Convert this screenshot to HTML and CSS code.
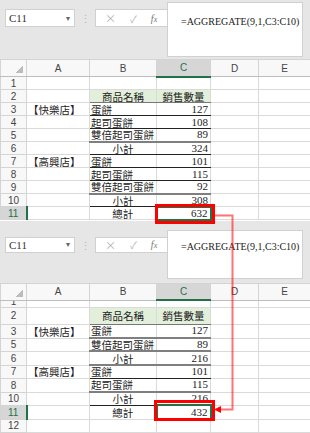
FILE: index.html
```html
<!DOCTYPE html>
<html lang="zh-Hant">
<head>
  <meta charset="UTF-8">
  <title>AGGREGATE 隱藏列</title>
  <link rel="stylesheet" href="styles.css">
</head>
<body>
  <div class="page">

    <!-- before hiding rows -->
    <section class="panel">
      <div class="toolbar">
        <div class="namebox"><span>C11</span><span class="caret">&#9662;</span></div>
        <div class="grip">&#8942;</div>
        <div class="fx-buttons"><span class="x">&#215;</span><span class="ok">&#10003;</span><span class="fx">f<i>x</i></span></div>
        <div class="formula">=AGGREGATE(9,1,C3:C10)</div>
      </div>
      <table class="grid">
        <colgroup><col class="c-hd"><col class="c-a"><col class="c-b"><col class="c-c"><col class="c-d"><col class="c-e"></colgroup>
        <tr class="head"><th class="corner"></th><th>A</th><th>B</th><th class="sel">C</th><th>D</th><th>E</th></tr>
        <tr><th>1</th><td></td><td></td><td></td><td></td><td></td></tr>
        <tr><th>2</th><td></td><td class="title">商品名稱</td><td class="title">銷售數量</td><td></td><td></td></tr>
        <tr><th>3</th><td>【快樂店】</td><td class="item line">蛋餅</td><td class="num line">127</td><td></td><td></td></tr>
        <tr><th>4</th><td></td><td class="item line">起司蛋餅</td><td class="num line">108</td><td></td><td></td></tr>
        <tr><th>5</th><td></td><td class="item heavy">雙倍起司蛋餅</td><td class="num heavy">89</td><td></td><td></td></tr>
        <tr><th>6</th><td></td><td class="item sub line">小計</td><td class="num line">324</td><td></td><td></td></tr>
        <tr><th>7</th><td>【高興店】</td><td class="item line">蛋餅</td><td class="num line">101</td><td></td><td></td></tr>
        <tr><th>8</th><td></td><td class="item line">起司蛋餅</td><td class="num line">115</td><td></td><td></td></tr>
        <tr><th>9</th><td></td><td class="item heavy">雙倍起司蛋餅</td><td class="num heavy">92</td><td></td><td></td></tr>
        <tr><th>10</th><td></td><td class="item sub line">小計</td><td class="num line">308</td><td></td><td></td></tr>
        <tr><th class="sel-row">11</th><td></td><td class="item sub">總計</td><td class="num active">632</td><td></td><td></td></tr>
      </table>
    </section>

    <!-- after hiding rows 4 and 9 -->
    <section class="panel panel-second">
      <div class="toolbar">
        <div class="namebox"><span>C11</span><span class="caret">&#9662;</span></div>
        <div class="grip">&#8942;</div>
        <div class="fx-buttons"><span class="x">&#215;</span><span class="ok">&#10003;</span><span class="fx">f<i>x</i></span></div>
        <div class="formula">=AGGREGATE(9,1,C3:C10)</div>
      </div>
      <table class="grid">
        <colgroup><col class="c-hd"><col class="c-a"><col class="c-b"><col class="c-c"><col class="c-d"><col class="c-e"></colgroup>
        <tr class="head"><th class="corner"></th><th>A</th><th>B</th><th class="sel">C</th><th>D</th><th>E</th></tr>
        <tr class="cut"><th><div class="clip">1</div></th><td></td><td></td><td></td><td></td><td></td></tr>
        <tr class="tall"><th>2</th><td></td><td class="title">商品名稱</td><td class="title">銷售數量</td><td></td><td></td></tr>
        <tr class="t"><th>3</th><td>【快樂店】</td><td class="item heavy">蛋餅</td><td class="num heavy">127</td><td></td><td></td></tr>
        <tr><th>5</th><td></td><td class="item heavy">雙倍起司蛋餅</td><td class="num heavy">89</td><td></td><td></td></tr>
        <tr class="t"><th>6</th><td></td><td class="item sub heavy">小計</td><td class="num heavy">216</td><td></td><td></td></tr>
        <tr><th>7</th><td>【高興店】</td><td class="item line">蛋餅</td><td class="num line">101</td><td></td><td></td></tr>
        <tr class="t"><th>8</th><td></td><td class="item heavy">起司蛋餅</td><td class="num heavy">115</td><td></td><td></td></tr>
        <tr><th>10</th><td></td><td class="item sub line">小計</td><td class="num line">216</td><td></td><td></td></tr>
        <tr class="t"><th class="sel-row">11</th><td></td><td class="item sub">總計</td><td class="num active">432</td><td></td><td></td></tr>
        <tr><th>12</th><td></td><td></td><td></td><td></td><td></td></tr>
      </table>
    </section>

    <!-- red callout linking the two totals -->
    <svg class="callout" width="310" height="433" viewBox="0 0 310 433">
      <rect x="156.5" y="205.5" width="57" height="17" fill="none" stroke="#ff0000" stroke-width="3"/>
      <rect x="155.5" y="401.5" width="58" height="18" fill="none" stroke="#ff0000" stroke-width="3"/>
      <polyline points="214,215.5 232.5,215.5 232.5,409.5 220,409.5" fill="none" stroke="#ff0000" stroke-opacity="0.55" stroke-width="2"/>
      <polygon points="214,409.5 221,406 221,413" fill="#ff0000"/>
    </svg>
  </div>
</body>
</html>
```

FILE: styles.css
```css
* {
  box-sizing: border-box;
}
body {
  margin: 0;
  background-color: #e6e6e6;
  font-family: "Noto Sans CJK TC", "Noto Sans", sans-serif;
  color: #222;
}
.page {
  position: relative;
  width: 310px;
  height: 433px;
  overflow: hidden;
}
.panel {
  background-color: #e6e6e6;
  padding-bottom: 3px;
}

/* formula bar */
.toolbar {
  display: flex;
  align-items: flex-start;
  height: 59px;
  padding-left: 5px;
  padding-right: 7px;
}
.namebox {
  display: flex;
  align-items: center;
  justify-content: space-between;
  width: 70px;
  height: 18px;
  margin-top: 9px;
  padding: 0 4px 0 3px;
  background-color: white;
  border: 1px solid #d0d0d0;
  font-family: "Liberation Serif", serif;
  font-size: 11px;
  color: #333;
}
.caret {
  font-size: 8px;
  color: #666;
}
.grip {
  width: 20px;
  margin-top: 10px;
  text-align: center;
  font-size: 11px;
  color: #b8b8b8;
}
.fx-buttons {
  display: flex;
  align-items: center;
  width: 72px;
  height: 18px;
  margin-top: 9px;
  padding-left: 9px;
  background-color: white;
  border: 1px solid #d0d0d0;
  border-right: none;
  color: #b0b0b0;
  font-size: 11px;
}
.fx-buttons .ok {
  margin-left: 14px;
  font-size: 10px;
}
.fx-buttons .fx {
  margin-left: 14px;
  font-family: "Liberation Serif", serif;
  font-style: italic;
  color: #777;
  font-size: 10px;
}
.fx-buttons .fx i {
  font-size: 8px;
}
.formula {
  flex: 1;
  height: 55px;
  margin-top: 2px;
  padding: 13px 0 0 13px;
  background-color: white;
  border: 1px solid #d0d0d0;
  font-family: "Liberation Serif", serif;
  font-size: 10px;
  color: #222;
}

/* sheet grid */
.grid {
  border-collapse: collapse;
  table-layout: fixed;
  width: 310px;
  background-color: white;
}
.c-hd { width: 26px; }
.c-a { width: 63px; }
.c-b { width: 67px; }
.c-c { width: 54px; }
.c-d { width: 48px; }
.c-e { width: 52px; }
.grid tr {
  height: 13px;
}
.grid td,
.grid th {
  padding: 0 1px;
  border: 1px solid #dadada;
  font-size: 10.5px;
  line-height: 11px;
  font-weight: normal;
  white-space: nowrap;
}
.grid th {
  background-color: #f8f8f8;
  border-color: #d4d4d4;
  color: #444;
  font-family: "Liberation Sans", sans-serif;
  font-size: 10px;
  text-align: center;
}
.grid .head {
  height: 17px;
}
.grid .head th {
  padding: 0;
  border-bottom-color: #bdbdbd;
}
.grid th.corner {
  background: linear-gradient(135deg, #f8f8f8 60%, #bcbcbc 60%) no-repeat right 3px bottom 3px / 9px 9px, #f8f8f8;
}
.grid th.sel {
  background-color: #d6d6d6;
  border-bottom: 2px solid #217346;
  color: #217346;
}
.grid th.sel-row {
  background-color: #d6d6d6;
  border-right: 2px solid #217346;
  color: #217346;
}
.grid .title {
  background-color: #e2efda;
  text-align: center;
  border-bottom: 1px solid #777;
}
.grid .sub {
  text-align: center;
}
.grid .num {
  text-align: right;
  padding-right: 2px;
  font-family: "Liberation Serif", serif;
  font-size: 11px;
  border-left: 1px solid #222;
}
.grid .line {
  border-bottom: 1px solid #222;
}
.grid .heavy {
  border-bottom: 2px solid #7f7f7f;
}
.grid .active {
  border: 2px solid #217346;
}

/* second picture is scaled a bit differently */
.panel-second .namebox {
  margin-top: 13px;
  height: 16px;
}
.panel-second .fx-buttons {
  margin-top: 13px;
  height: 16px;
}
.panel-second .grip {
  margin-top: 13px;
}
.panel-second .formula {
  margin-top: 6px;
  height: 49px;
  padding-top: 10px;
}
.panel-second .grid .head {
  height: 17px;
}
.panel-second .grid tr.cut {
  height: 7px;
}
.panel-second .grid tr.tall {
  height: 17px;
}
.panel-second .grid tr.t {
  height: 14px;
}
.clip {
  height: 6px;
  overflow: hidden;
  line-height: 2px;
}

/* annotation overlay */
.callout {
  position: absolute;
  left: 0;
  top: 0;
  pointer-events: none;
}
```
